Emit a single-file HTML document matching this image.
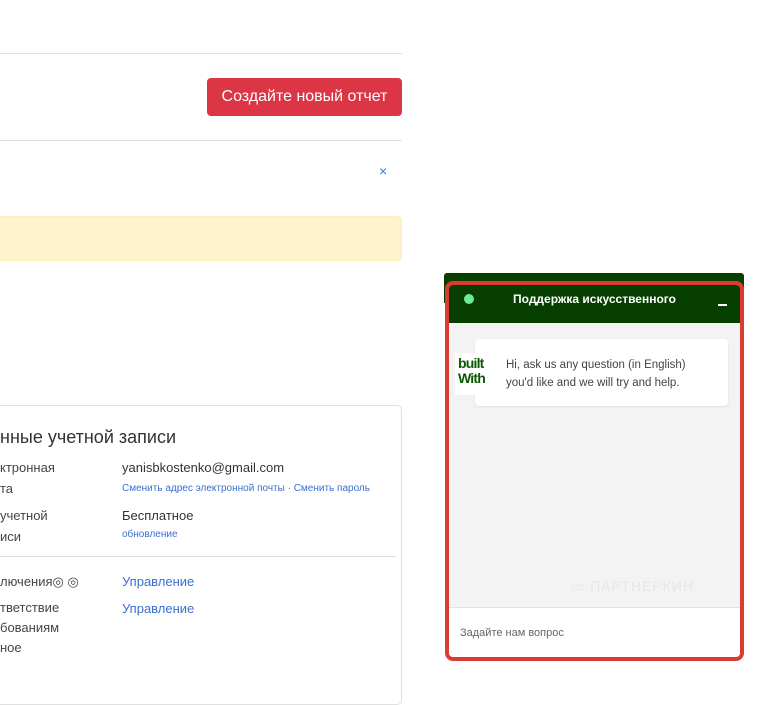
<!DOCTYPE html>
<html><head><meta charset="utf-8"><style>
*{box-sizing:border-box;margin:0;padding:0}
body{width:768px;height:661px;overflow:hidden;background:#fff;font-family:"Liberation Sans","DejaVu Sans",sans-serif;position:relative;color:#333}
.a{position:absolute}
.hr{position:absolute;left:0;width:402px;height:1px;background:#e0e0e0}
.lbl{position:absolute;left:0;font-size:13px;color:#444;line-height:21px}
.val{position:absolute;left:122px;font-size:13px;color:#333}
.lnk{position:absolute;left:122px;font-size:10px;color:#3b6fd1}
.mg{position:absolute;left:122px;font-size:13px;color:#3b6fd1}
</style></head><body>
<div class="hr" style="top:53px"></div>
<div class="a" style="left:207px;top:78px;width:195px;height:38px;background:#dc3545;border-radius:4px;color:#fff;font-size:16px;line-height:38px;text-align:center">Создайте новый отчет</div>
<div class="hr" style="top:140px"></div>
<div class="a" style="left:379px;top:163px;font-size:14px;color:#3b7bd1">×</div>
<div class="a" style="left:-4px;top:216px;width:406px;height:45px;background:#fff3cd;border:1px solid #ffeeba;border-radius:4px"></div>

<div class="a" style="left:-6px;top:405px;width:408px;height:300px;border:1px solid #e0e0e0;border-radius:5px"></div>
<div class="a" style="left:0;top:427px;font-size:18px;color:#333">нные учетной записи</div>
<div class="lbl" style="top:457px">ктронная<br>та</div>
<div class="val" style="top:460px">yanisbkostenko@gmail.com</div>
<div class="lnk" style="top:483px">Сменить адрес электронной почты · Сменить пароль</div>
<div class="lbl" style="top:505px">учетной<br>иси</div>
<div class="val" style="top:508px">Бесплатное</div>
<div class="lnk" style="top:529px">обновление</div>
<div class="a" style="left:0;top:556px;width:396px;height:1px;background:#e0e0e0"></div>
<div class="lbl" style="top:571px">лючения◎ ◎</div>
<div class="mg" style="top:574px">Управление</div>
<div class="lbl" style="top:598px;line-height:20px">тветствие<br>бованиям<br>ное</div>
<div class="mg" style="top:601px">Управление</div>

<div class="a" style="left:444px;top:273px;width:300px;height:30px;background:#073f00;border-radius:3px 3px 0 0"></div>
<div class="a" style="left:445px;top:281px;width:299px;height:380px;border:4px solid #dc3b32;border-radius:8px;background:#f3f3f3;overflow:hidden">
  <div class="a" style="left:0;top:0;width:291px;height:38px;background:#073f00"></div>
  <div class="a" style="left:15px;top:9px;width:10px;height:10px;border-radius:50%;background:#6ee89a"></div>
  <div class="a" style="left:0;top:7px;width:291px;text-align:center;color:#fff;font-size:12px;font-weight:bold">Поддержка искусственного</div>
  <div class="a" style="left:269px;top:19px;width:9px;height:2px;background:#fff"></div>
  <div class="a" style="left:26px;top:54px;width:253px;height:67px;background:#fff;border-radius:4px;box-shadow:0 1px 2px rgba(0,0,0,.08)"></div>
  <div class="a" style="left:6px;top:68px;width:34px;height:42px;background:#fff;color:#0a5a00;font-weight:900;font-size:14px;line-height:15px;letter-spacing:-.8px;padding:3px 0 0 3px">built<br>With</div>
  <div class="a" style="left:57px;top:71px;font-size:11.5px;line-height:18px;color:#444">Hi, ask us any question (in English)<br>you'd like and we will try and help.</div>
  <div class="a" style="left:122px;top:293px;font-size:14px;color:#e6e6e6;letter-spacing:1px">▭ ПАРТНЕРКИН</div>
  <div class="a" style="left:0;top:322px;width:291px;height:60px;background:#fff;border-top:1px solid #e2e2e2"></div>
  <div class="a" style="left:11px;top:342px;font-size:11px;color:#666">Задайте нам вопрос</div>
</div>
</body></html>
